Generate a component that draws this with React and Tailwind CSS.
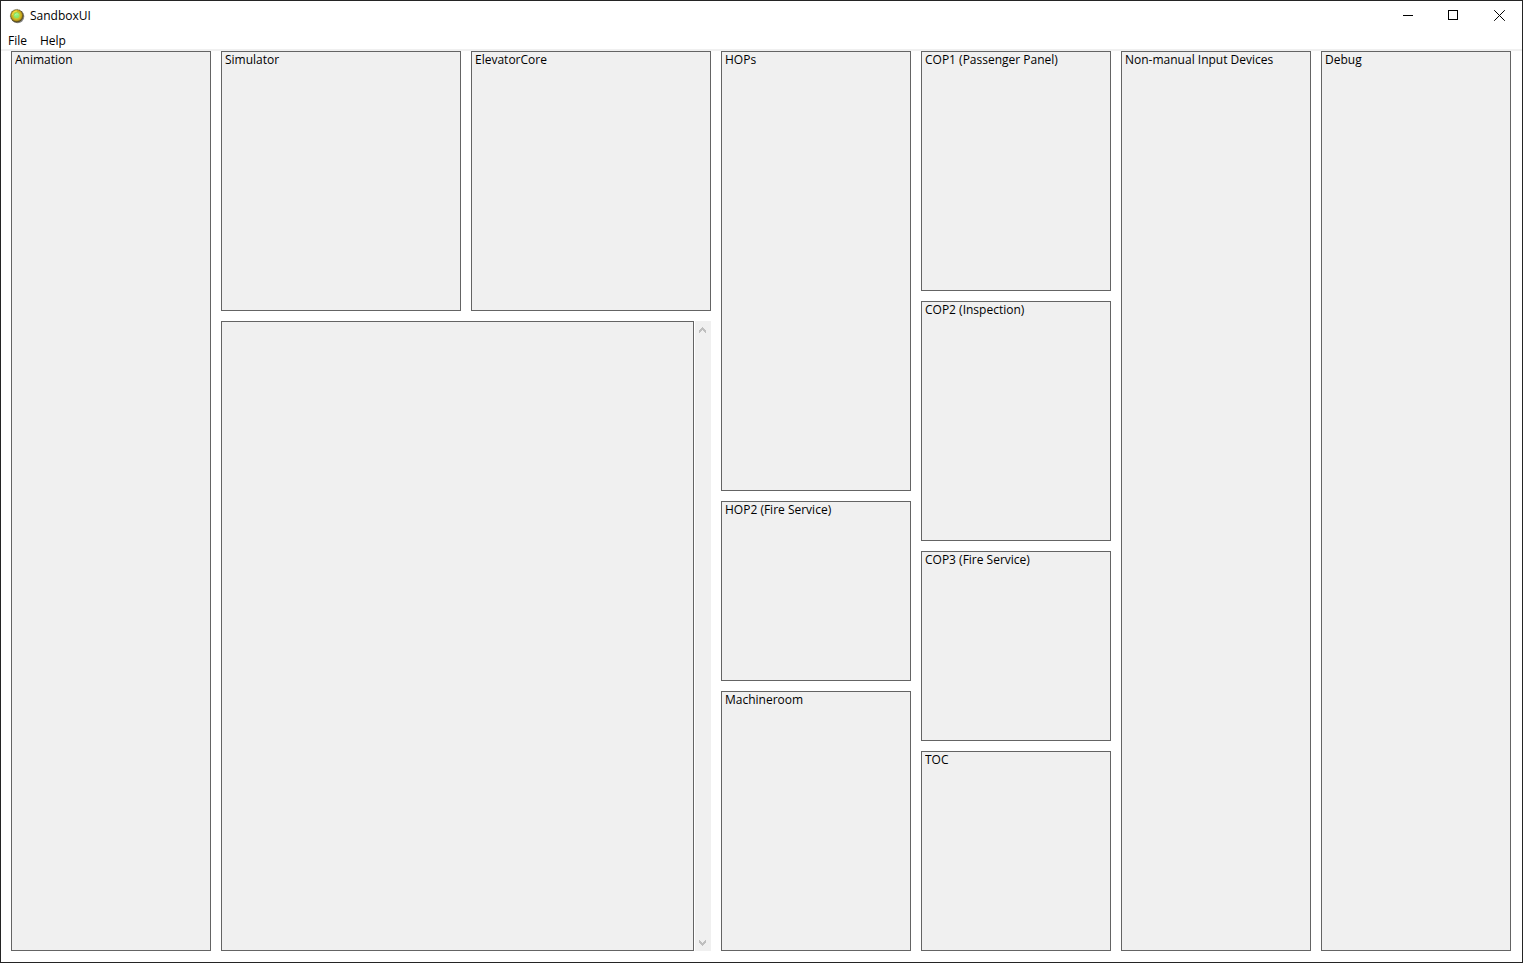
function AppIcon() {
  return (
    <svg width="16" height="16" viewBox="0 0 16 16" aria-hidden="true">
      <defs>
        <radialGradient id="orb" cx="0.48" cy="0.46" r="0.54">
          <stop offset="0" stopColor="#9cf07c" />
          <stop offset="0.36" stopColor="#84e468" />
          <stop offset="0.48" stopColor="#c8c830" />
          <stop offset="0.72" stopColor="#c8a41c" />
          <stop offset="0.88" stopColor="#7c6618" />
          <stop offset="1" stopColor="#3c3414" />
        </radialGradient>
      </defs>
      <circle cx="8.6" cy="8.6" r="6.7" fill="#606060" opacity="0.7" />
      <circle cx="7.8" cy="7.8" r="6.4" fill="url(#orb)" />
      <circle cx="7.8" cy="7.8" r="6.4" fill="none" stroke="#4c4828" strokeWidth="0.8" strokeDasharray="1 1" />
      <path d="M3.4 7.2 4 5.2 5.6 3.6 8 3" fill="none" stroke="#f0dc48" strokeWidth="1.1" />
      <path d="M5.9 7.6a2 2 0 0 1 3.6-.8" fill="none" stroke="#c8ffb0" strokeWidth="0.8" />
    </svg>
  );
}

function Panel({ title, className }) {
  return (
    <section className={`min-h-0 min-w-0 border border-[#646464] bg-[#f0f0f0] px-[3px] ${className}`}>
      <h2 className="truncate leading-4">{title}</h2>
    </section>
  );
}

function CaptionButton({ label, children }) {
  return (
    <button type="button" aria-label={label} className="flex h-[29px] w-[46px] items-center justify-center hover:bg-[#e5e5e5]">
      <svg width="12" height="11" viewBox="0 0 12 11" fill="none" stroke="#000000" shapeRendering="crispEdges">
        {children}
      </svg>
    </button>
  );
}

function ScrollButton({ label, d, className }) {
  return (
    <button type="button" aria-label={label} disabled className={`flex w-full px-1 ${className}`}>
      <svg width="7" height="6" viewBox="0 0 7 6" fill="#bfbfbf" shapeRendering="crispEdges">
        <path d={d} />
      </svg>
    </button>
  );
}

export default function App() {
  return (
    <div className="flex min-h-screen flex-col border border-[#242424] bg-white font-['Open_Sans','Noto_Sans',sans-serif] text-[12px] text-black">
      <header className="flex h-[30px] items-start justify-between">
        <div className="flex h-[30px] items-center gap-[5px] pl-2">
          <AppIcon />
          <h1 className="leading-4">SandboxUI</h1>
        </div>
        <div className="flex">
          <CaptionButton label="Minimize">
            <path d="M2 5.5H12" />
          </CaptionButton>
          <CaptionButton label="Maximize">
            <path d="M1.5 .5h9v9h-9z" />
          </CaptionButton>
          <CaptionButton label="Close">
            <path d="M1.2 .2 11.8 10.8M11.8 .2 1.2 10.8" shapeRendering="auto" />
          </CaptionButton>
        </div>
      </header>
      <nav aria-label="Main menu" className="flex h-5 items-end gap-[13px] border-b-2 border-[#f0f0f0] px-[7px]">
        <button type="button" className="leading-4">File</button>
        <button type="button" className="leading-4">Help</button>
      </nav>
      <main className="grid flex-1 grid-cols-[200fr_490fr_190fr_190fr_190fr_190fr] gap-[10px] pr-[11px] pb-[11px] pl-[10px]">
        <Panel title="Animation" className="" />
        <div className="flex min-w-0 flex-col gap-[10px]">
          <div className="flex flex-[260] gap-[10px]">
            <Panel title="Simulator" className="flex-1" />
            <Panel title="ElevatorCore" className="flex-1" />
          </div>
          <div className="flex flex-[630] gap-px">
            <textarea
              aria-label="Log output"
              readOnly
              className="block min-w-0 flex-1 resize-none border border-[#646464] bg-[#f0f0f0] px-[3px] leading-4 outline-none"
            />
            <div className="flex w-4 flex-col justify-between bg-[#f0f0f0]">
              <ScrollButton
                label="Scroll up"
                className="pt-[6px] pb-[5px]"
                d="M3 0h1v1h1v1h1v1h1v3H6V5H5V4H4V3H3v1H2v1H1v1H0V3h1V2h1V1h1z"
              />
              <ScrollButton
                label="Scroll down"
                className="pt-[6px] pb-[5px]"
                d="M3 6h1V5h1V4h1V3h1V0H6v1H5v1H4v1H3V2H2V1H1V0H0v3h1v1h1v1h1z"
              />
            </div>
          </div>
        </div>
        <div className="flex min-w-0 flex-col gap-[10px]">
          <Panel title="HOPs" className="flex-[438]" />
          <Panel title="HOP2 (Fire Service)" className="flex-[178]" />
          <Panel title="Machineroom" className="flex-[258]" />
        </div>
        <div className="flex min-w-0 flex-col gap-[10px]">
          <Panel title="COP1 (Passenger Panel)" className="flex-[238]" />
          <Panel title="COP2 (Inspection)" className="flex-[238]" />
          <Panel title="COP3 (Fire Service)" className="flex-[188]" />
          <Panel title="TOC" className="flex-[198]" />
        </div>
        <Panel title="Non-manual Input Devices" className="" />
        <Panel title="Debug" className="" />
      </main>
    </div>
  );
}
